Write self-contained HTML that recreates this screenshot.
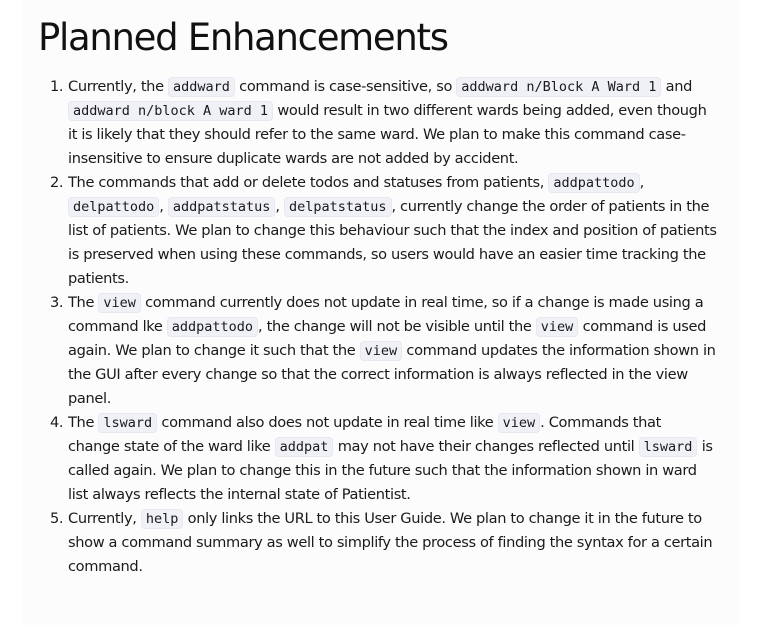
<!DOCTYPE html>
<html><head><meta charset="utf-8"><style>
html,body{margin:0;padding:0;width:758px;height:625px;background:#fff;overflow:hidden}
.panel{position:absolute;left:22px;top:0;width:718px;height:625px;background:#fcfcfc}
h1{position:absolute;left:38px;top:14px;margin:0;font:400 37px/48px "DejaVu Sans","Liberation Sans",sans-serif;color:#111;letter-spacing:-1.3px}
.body{position:absolute;left:0;top:75px;font:14.6px/24px "DejaVu Sans","Liberation Sans",sans-serif;color:#1a1a1a;letter-spacing:-0.36px;white-space:nowrap}
.l{position:absolute;left:68px;height:24px}
.n{position:absolute;left:50px}
code{font:13.5px "DejaVu Sans Mono","Liberation Mono",monospace;background:#f0f0f7;border:1px solid #e8e8f0;border-radius:4px;padding:1px 4px;letter-spacing:0}
</style></head><body>
<div class="panel"></div>
<h1>Planned Enhancements</h1>
<div class="body">
<span class="n" style="top:0">1.</span>
<div class="l" style="top:0">Currently, the <code>addward</code> command is case-sensitive, so <code>addward n/Block A Ward 1</code> and</div>
<div class="l" style="top:24px"><code>addward n/block A ward 1</code> would result in two different wards being added, even though</div>
<div class="l" style="top:48px">it is likely that they should refer to the same ward. We plan to make this command case-</div>
<div class="l" style="top:72px">insensitive to ensure duplicate wards are not added by accident.</div>
<span class="n" style="top:96px">2.</span>
<div class="l" style="top:96px">The commands that add or delete todos and statuses from patients, <code>addpattodo</code>,</div>
<div class="l" style="top:120px"><code>delpattodo</code>, <code>addpatstatus</code>, <code>delpatstatus</code>, currently change the order of patients in the</div>
<div class="l" style="top:144px">list of patients. We plan to change this behaviour such that the index and position of patients</div>
<div class="l" style="top:168px">is preserved when using these commands, so users would have an easier time tracking the</div>
<div class="l" style="top:192px">patients.</div>
<span class="n" style="top:216px">3.</span>
<div class="l" style="top:216px">The <code>view</code> command currently does not update in real time, so if a change is made using a</div>
<div class="l" style="top:240px">command lke <code>addpattodo</code>, the change will not be visible until the <code>view</code> command is used</div>
<div class="l" style="top:264px">again. We plan to change it such that the <code>view</code> command updates the information shown in</div>
<div class="l" style="top:288px">the GUI after every change so that the correct information is always reflected in the view</div>
<div class="l" style="top:312px">panel.</div>
<span class="n" style="top:336px">4.</span>
<div class="l" style="top:336px">The <code>lsward</code> command also does not update in real time like <code>view</code>. Commands that</div>
<div class="l" style="top:360px">change state of the ward like <code>addpat</code> may not have their changes reflected until <code>lsward</code> is</div>
<div class="l" style="top:384px">called again. We plan to change this in the future such that the information shown in ward</div>
<div class="l" style="top:408px">list always reflects the internal state of Patientist.</div>
<span class="n" style="top:432px">5.</span>
<div class="l" style="top:432px">Currently, <code>help</code> only links the URL to this User Guide. We plan to change it in the future to</div>
<div class="l" style="top:456px">show a command summary as well to simplify the process of finding the syntax for a certain</div>
<div class="l" style="top:480px">command.</div>
</div>
</body></html>
